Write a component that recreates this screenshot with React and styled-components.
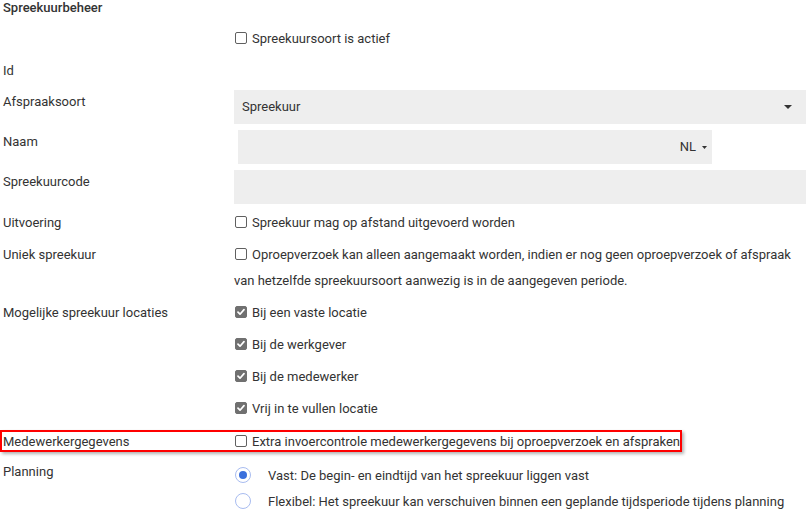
import React from 'react';
import styled, { createGlobalStyle } from 'styled-components';

const Global = createGlobalStyle`
  html, body { margin: 0; padding: 0; background: #fff; }
  body {
    font-family: Roboto, "Noto Sans", "Liberation Sans", Arial, sans-serif;
    font-size: 13px;
    color: #333;
  }
`;

const Page = styled.div`
  width: 811px;
  height: 524px;
  overflow: hidden;
  box-sizing: border-box;
  padding: 0 5px 0 3px;
`;

const Title = styled.div`
  font-weight: 500;
  line-height: 16px;
  height: 23px;
`;

const Row = styled.div`
  display: flex;
  align-items: flex-start;
  min-height: ${p => (p.$input ? '40px' : '32px')};
  box-sizing: border-box;
  padding: ${p => (p.$input ? '0' : '3px 0')};
`;

const Label = styled.div`
  width: 231px;
  flex: none;
  line-height: ${p => (p.$input ? '20px' : '26px')};
  padding-top: ${p => (p.$input ? '5px' : '0')};
`;

const Content = styled.div`
  flex: 1;
  min-width: 0;
  line-height: 26px;
`;

const Highlight = styled.div`
  display: flex;
  align-items: center;
  box-sizing: border-box;
  width: 682px;
  height: 22px;
  margin: 5px 0 4px -3px;
  padding-left: 1px;
  border: 2px solid #ff0000;
  box-shadow: 2px 2px 3px rgba(0, 0, 0, 0.3);
  line-height: 17px;
`;

const HighlightLabel = styled.div`
  width: 231px;
  flex: none;
`;

const Box = styled.span`
  display: inline-block;
  box-sizing: border-box;
  width: 12px;
  height: 12px;
  margin: 0 5px 0 1px;
  vertical-align: -1px;
  border-radius: 2px;
  border: 1px solid ${p => (p.$checked ? '#707070' : '#606060')};
  background: ${p => (p.$checked ? '#707070' : '#fff')};
  position: relative;
  svg { position: absolute; left: 1px; top: 1px; }
`;

const Check = ({ checked, children }) => (
  <span>
    <Box $checked={checked}>
      {checked && (
        <svg width="8" height="8" viewBox="0 0 8 8">
          <path d="M1 4.2 L3 6.2 L7 1.6" fill="none" stroke="#fff" strokeWidth="1.7" strokeLinecap="round" strokeLinejoin="round" />
        </svg>
      )}
    </Box>
    {children}
  </span>
);

const CheckLine = styled.div`
  line-height: 26px;
  height: ${p => (p.$stack ? '32px' : 'auto')};
`;

const Field = styled.div`
  box-sizing: border-box;
  height: 34px;
  margin: 3px 0 0 ${p => p.$indent || 0}px;
  width: ${p => p.$width || 572}px;
  background: #eeeeee;
  display: flex;
  align-items: center;
  padding: 0 ${p => p.$right || 0}px 0 8px;
  line-height: 20px;
`;

const FieldText = styled.span`
  flex: 1;
`;

const Lang = styled.span`
  display: inline-flex;
  align-items: center;
  gap: 6px;
`;

const RadioList = styled.div`
  padding-top: 3px;
`;

const RadioRow = styled.div`
  display: flex;
  align-items: center;
  height: 26px;
`;

const RadioCircle = styled.span`
  flex: none;
  box-sizing: border-box;
  width: 16px;
  height: 16px;
  margin: 0 17px 0 1px;
  border-radius: 50%;
  border: 1.5px solid #a8bcf0;
  display: flex;
  align-items: center;
  justify-content: center;
  &::after {
    content: '';
    display: ${p => (p.$checked ? 'block' : 'none')};
    width: 8px;
    height: 8px;
    border-radius: 50%;
    background: #3a6fdc;
  }
`;

const Caret = ({ w, h }) => (
  <svg width={w} height={h} viewBox={`0 0 ${w} ${h}`}>
    <path d={`M0 0 L${w} 0 L${w / 2} ${h} Z`} fill="#333" />
  </svg>
);

export default function App() {
  return (
    <>
      <Global />
      <Page>
        <Title>Spreekuurbeheer</Title>
        <Row>
          <Label />
          <Content><Check>Spreekuursoort is actief</Check></Content>
        </Row>
        <Row>
          <Label>Id</Label>
          <Content />
        </Row>
        <Row $input>
          <Label $input>Afspraaksoort</Label>
          <Field $right={14}>
            <FieldText>Spreekuur</FieldText>
            <Caret w={8} h={4} />
          </Field>
        </Row>
        <Row $input>
          <Label $input>Naam</Label>
          <Field $indent={4} $width={474} $right={5}>
            <FieldText />
            <Lang>NL <Caret w={5} h={3} /></Lang>
          </Field>
        </Row>
        <Row $input>
          <Label $input>Spreekuurcode</Label>
          <Field />
        </Row>
        <Row>
          <Label>Uitvoering</Label>
          <Content><Check>Spreekuur mag op afstand uitgevoerd worden</Check></Content>
        </Row>
        <Row>
          <Label>Uniek spreekuur</Label>
          <Content>
            <Check>Oproepverzoek kan alleen aangemaakt worden, indien er nog geen oproepverzoek of afspraak van hetzelfde spreekuursoort aanwezig is in de aangegeven periode.</Check>
          </Content>
        </Row>
        <Row>
          <Label>Mogelijke spreekuur locaties</Label>
          <Content>
            <CheckLine $stack><Check checked>Bij een vaste locatie</Check></CheckLine>
            <CheckLine $stack><Check checked>Bij de werkgever</Check></CheckLine>
            <CheckLine $stack><Check checked>Bij de medewerker</Check></CheckLine>
            <CheckLine><Check checked>Vrij in te vullen locatie</Check></CheckLine>
          </Content>
        </Row>
        <Highlight>
          <HighlightLabel>Medewerkergegevens</HighlightLabel>
          <Check>Extra invoercontrole medewerkergegevens bij oproepverzoek en afspraken</Check>
        </Highlight>
        <Row>
          <Label>Planning</Label>
          <RadioList>
            <RadioRow><RadioCircle $checked />Vast: De begin- en eindtijd van het spreekuur liggen vast</RadioRow>
            <RadioRow><RadioCircle />Flexibel: Het spreekuur kan verschuiven binnen een geplande tijdsperiode tijdens planning</RadioRow>
          </RadioList>
        </Row>
      </Page>
    </>
  );
}
